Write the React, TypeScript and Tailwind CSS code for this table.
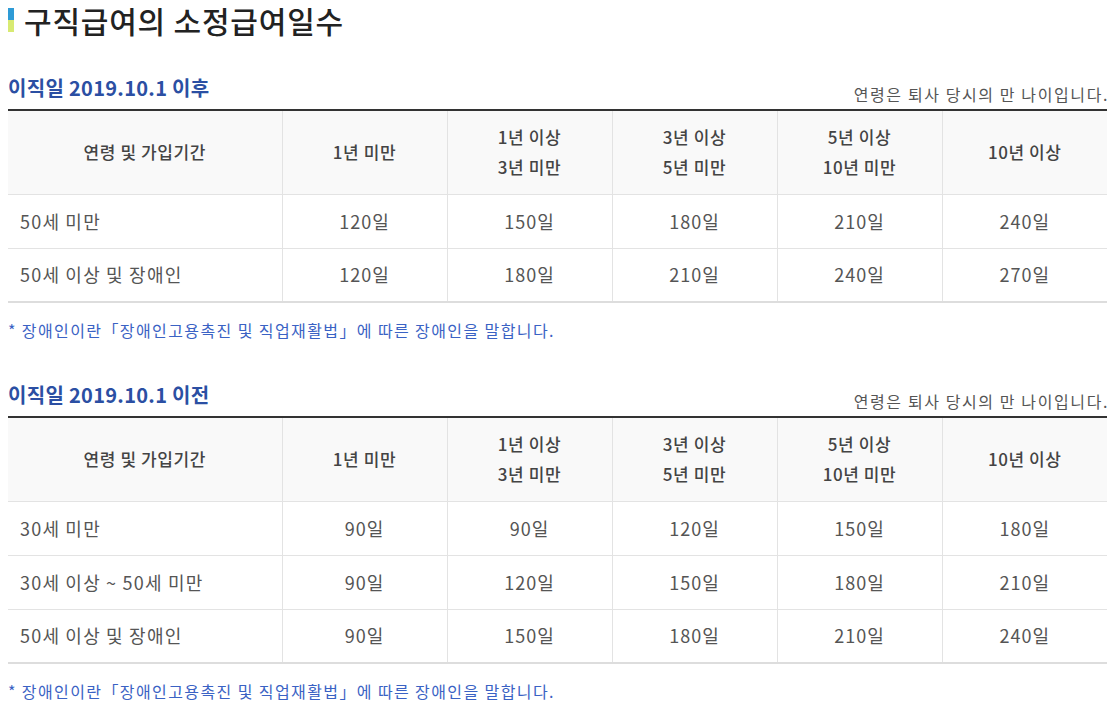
const headCols = [
  ["1년 미만"],
  ["1년 이상", "3년 미만"],
  ["3년 이상", "5년 미만"],
  ["5년 이상", "10년 미만"],
  ["10년 이상"],
];

type Section = {
  title: string;
  rows: { label: string; days: string[] }[];
};

const sections: Section[] = [
  {
    title: "이직일 2019.10.1 이후",
    rows: [
      { label: "50세 미만", days: ["120일", "150일", "180일", "210일", "240일"] },
      { label: "50세 이상 및 장애인", days: ["120일", "180일", "210일", "240일", "270일"] },
    ],
  },
  {
    title: "이직일 2019.10.1 이전",
    rows: [
      { label: "30세 미만", days: ["90일", "90일", "120일", "150일", "180일"] },
      { label: "30세 이상 ~ 50세 미만", days: ["90일", "120일", "150일", "180일", "210일"] },
      { label: "50세 이상 및 장애인", days: ["90일", "150일", "180일", "210일", "240일"] },
    ],
  },
];

function DaysTable({ section }: { section: Section }) {
  return (
    <div>
      {/* heading line */}
      <div className="flex items-end justify-between h-[44px] pb-[9px]">
        <h2 className="text-[20px] leading-[24px] font-semibold tracking-[0.3px] text-[#2b4fa3]">{section.title}</h2>
        <p className="text-[16px] leading-[20px] tracking-[1.6px] text-[#555] -mb-[4px] -mr-[2px]">연령은 퇴사 당시의 만 나이입니다.</p>
      </div>

      <table className="w-full border-collapse table-fixed border-t-2 border-t-[#333] border-b-2 border-b-[#ddd]">
        <colgroup>
          <col className="w-[274px]" />
          <col />
          <col />
          <col />
          <col />
          <col />
        </colgroup>
        <thead>
          <tr className="h-[84px] bg-[#f9f9f9]">
            <th className="font-medium text-[17px] leading-[30px] tracking-[0.6px] text-[#444] text-center border-b border-[#e3e3e3]">
              연령 및 가입기간
            </th>
            {headCols.map((lines, i) => (
              <th
                key={i}
                className="font-medium text-[17px] leading-[30px] tracking-[0.6px] text-[#444] text-center border-b border-l border-[#e3e3e3]"
              >
                {lines.map((l) => (
                  <div key={l}>{l}</div>
                ))}
              </th>
            ))}
          </tr>
        </thead>
        <tbody>
          {section.rows.map((row, r) => (
            <tr key={row.label} className="h-[54px]">
              <td
                className={
                  "pl-[12px] text-[18px] tracking-[1.2px] text-[#555] " +
                  (r < section.rows.length - 1 ? "border-b border-[#e3e3e3]" : "")
                }
              >
                {row.label}
              </td>
              {row.days.map((d, i) => (
                <td
                  key={i}
                  className={
                    "text-center text-[18px] tracking-[1px] text-[#555] border-l border-[#e3e3e3] " +
                    (r < section.rows.length - 1 ? "border-b" : "")
                  }
                >
                  {d}
                </td>
              ))}
            </tr>
          ))}
        </tbody>
      </table>

      <p className="mt-[17px] text-[16px] leading-[20px] tracking-[1.4px] text-[#3a62c4]">
        * 장애인이란「장애인고용촉진 및 직업재활법」에 따른 장애인을 말합니다.
      </p>
    </div>
  );
}

export default function App() {
  return (
    <div
      className="bg-white px-2 min-h-screen"
      style={{ fontFamily: '"Noto Sans CJK KR", "Noto Sans", sans-serif' }}
    >
      {/* Page title */}
      <div className="flex items-center gap-[10px] h-[40px]">
        <div className="flex flex-col w-[6px]">
          <span className="h-[12px] bg-[#2e9bd6]" />
          <span className="h-[12px] bg-[#d8ea72]" />
        </div>
        <h1 className="text-[30px] leading-[36px] font-medium tracking-[0.8px] text-[#222]">구직급여의 소정급여일수</h1>
      </div>

      <div className="mt-[25px]">
        <DaysTable section={sections[0]} />
      </div>
      <div className="mt-[32px]">
        <DaysTable section={sections[1]} />
      </div>
    </div>
  );
}
